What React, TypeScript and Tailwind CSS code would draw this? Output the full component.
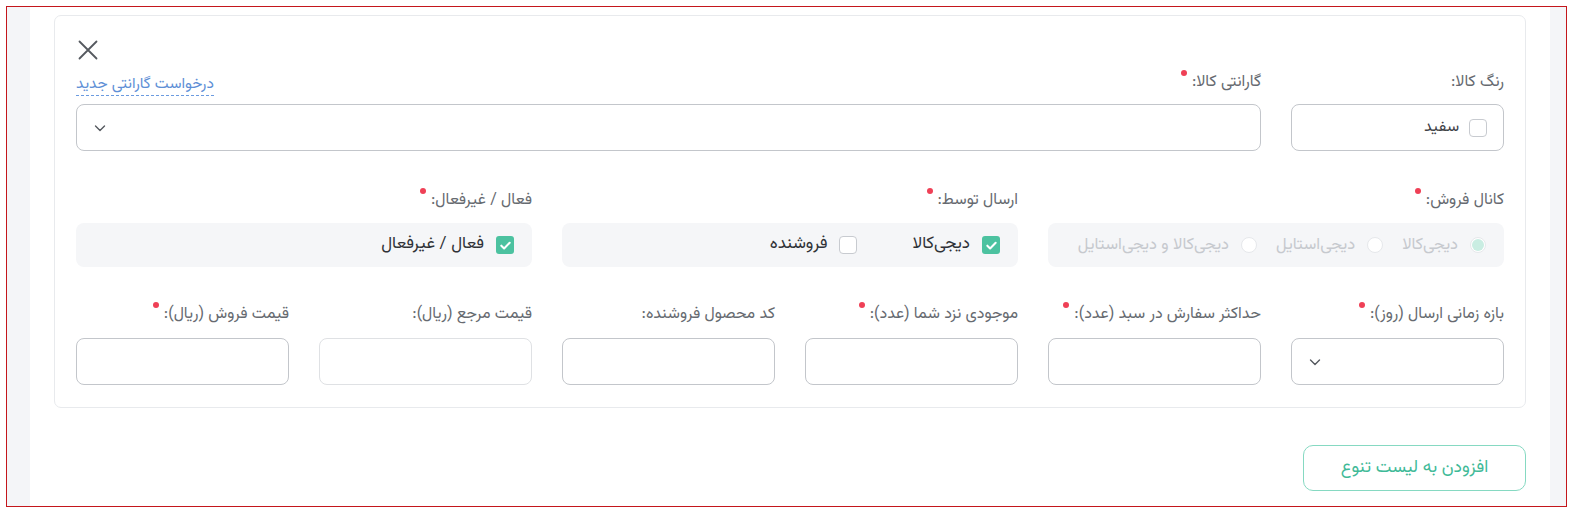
import React from 'react';

const font = { fontFamily: '"Vazirmatn", "Noto Sans Arabic", "DejaVu Sans", sans-serif' };

const Dot = () => <span className="mt-[-3px] inline-block h-[6px] w-[6px] self-start rounded-full bg-[#ef4056]" />;

const Label = ({ text, required = false }: { text: string; required?: boolean }) => (
  <div className="flex h-5 items-center gap-[5px] text-[16px] text-[#666a70]">
    <span>{text}</span>
    {required && <Dot />}
  </div>
);

const Chevron = () => (
  <svg width="14" height="14" viewBox="0 0 14 14" fill="none" stroke="#55595f" strokeWidth="1.4" strokeLinecap="round" strokeLinejoin="round">
    <path d="M2.5 5l4.5 4.5L11.5 5" />
  </svg>
);

const Checkbox = ({ checked = false }: { checked?: boolean }) =>
  checked ? (
    <span className="flex h-[18px] w-[18px] items-center justify-center rounded-[3px] bg-[#4cc2a0]">
      <svg width="13" height="13" viewBox="0 0 14 14" fill="none" stroke="white" strokeWidth="2.2" strokeLinecap="round" strokeLinejoin="round">
        <path d="M2.5 7.2l3 3L11.5 4" />
      </svg>
    </span>
  ) : (
    <span className="h-[18px] w-[18px] rounded-[4px] border border-[#c8cbd0] bg-white" />
  );

const Radio = ({ checked = false }: { checked?: boolean }) => (
  <span className="flex h-[16px] w-[16px] items-center justify-center rounded-full border border-[#e6e8eb] bg-white">
    {checked && <span className="h-[12px] w-[12px] rounded-full bg-[#c9ede2]" />}
  </span>
);

const TextInput = ({ muted = false }: { muted?: boolean }) => (
  <div className={`h-[47px] rounded-[8px] border bg-white ${muted ? 'border-[#dfe1e4]' : 'border-[#c3c6cb]'}`} />
);

const SelectInput = () => (
  <div className="flex h-[47px] items-center justify-end rounded-[8px] border border-[#c3c6cb] bg-white pl-[16px]">
    <Chevron />
  </div>
);

const Field = ({ label, required, children }: { label: string; required?: boolean; children: React.ReactNode }) => (
  <div className="flex flex-col gap-[13px]">
    <Label text={label} required={required} />
    {children}
  </div>
);

export default function App() {
  return (
    <div dir="rtl" style={font} className="h-[516px] w-full bg-white pb-[6px] pl-[6px] pr-[9px] pt-[6px]">
      <div className="flex h-[501px] border border-[#c4161c] bg-[#f4f5f8] pl-[23px] pr-[16px]">
        <div className="flex flex-1 flex-col bg-white px-[24px] pt-[8px]">
          <div className="rounded-[7px] border border-[#e8eaed] px-[21px] pb-[22px] pt-[24px]">
            <div className="flex h-[20px] justify-end pl-[2px]">
              <svg width="20" height="20" viewBox="0 0 20 20" fill="none" stroke="#55595f" strokeWidth="1.8" strokeLinecap="round">
                <path d="M1.5 1.5l17 17M18.5 1.5l-17 17" />
              </svg>
            </div>

            <div className="mt-[13px] grid grid-cols-6 gap-x-[30px]">
              <div className="flex flex-col gap-[11px]">
                <Label text="رنگ کالا:" />
                <div className="flex h-[47px] items-center gap-[10px] rounded-[8px] border border-[#c3c6cb] bg-white pr-[16px]">
                  <Checkbox />
                  <span className="text-[16px] text-[#3f4247]">سفید</span>
                </div>
              </div>
              <div className="col-span-5 flex flex-col gap-[11px]">
                <div className="flex h-5 items-center justify-between">
                  <Label text="گارانتی کالا:" required />
                  <a className="mt-[5px] border-b border-dashed border-[#6b9be0] pb-[2px] text-[15.5px] leading-[18px] text-[#5e8fd6]">درخواست گارانتی جدید</a>
                </div>
                <SelectInput />
              </div>
            </div>

            <div className="mt-[40px] grid grid-cols-6 gap-x-[30px]">
              <div className="col-span-2 flex flex-col gap-[12px]">
                <Label text="کانال فروش:" required />
                <div className="flex h-[44px] items-center gap-[19px] rounded-[8px] bg-[#f5f6f8] pr-[18px] text-[16.5px] text-[#c6c9ce]">
                  <div className="flex items-center gap-[12px]"><Radio checked /><span>دیجی‌کالا</span></div>
                  <div className="flex items-center gap-[12px]"><Radio /><span>دیجی‌استایل</span></div>
                  <div className="flex items-center gap-[12px]"><Radio /><span>دیجی‌کالا و دیجی‌استایل</span></div>
                </div>
              </div>
              <div className="col-span-2 flex flex-col gap-[12px]">
                <Label text="ارسال توسط:" required />
                <div className="flex h-[44px] items-center gap-[55px] rounded-[8px] bg-[#f5f6f8] pr-[18px] text-[17px] text-[#2f3237]">
                  <div className="flex items-center gap-[12px]"><Checkbox checked /><span>دیجی‌کالا</span></div>
                  <div className="flex items-center gap-[12px]"><Checkbox /><span>فروشنده</span></div>
                </div>
              </div>
              <div className="col-span-2 flex flex-col gap-[12px]">
                <Label text="فعال / غیرفعال:" required />
                <div className="flex h-[44px] items-center rounded-[8px] bg-[#f5f6f8] pr-[18px] text-[17px] text-[#2f3237]">
                  <div className="flex items-center gap-[12px]"><Checkbox checked /><span>فعال / غیرفعال</span></div>
                </div>
              </div>
            </div>

            <div className="mt-[38px] grid grid-cols-6 gap-x-[30px]">
              <Field label="بازه زمانی ارسال (روز):" required><SelectInput /></Field>
              <Field label="حداکثر سفارش در سبد (عدد):" required><TextInput /></Field>
              <Field label="موجودی نزد شما (عدد):" required><TextInput /></Field>
              <Field label="کد محصول فروشنده:"><TextInput /></Field>
              <Field label="قیمت مرجع (ریال):"><TextInput muted /></Field>
              <Field label="قیمت فروش (ریال):" required><TextInput /></Field>
            </div>
          </div>

          <div className="mt-[37px] flex">
            <button className="flex h-[46px] w-[223px] items-center justify-center rounded-[10px] border border-[#86d9c2] bg-white text-[17.5px] text-[#3fba98]">
              افزودن به لیست تنوع
            </button>
          </div>
        </div>
      </div>
    </div>
  );
}
